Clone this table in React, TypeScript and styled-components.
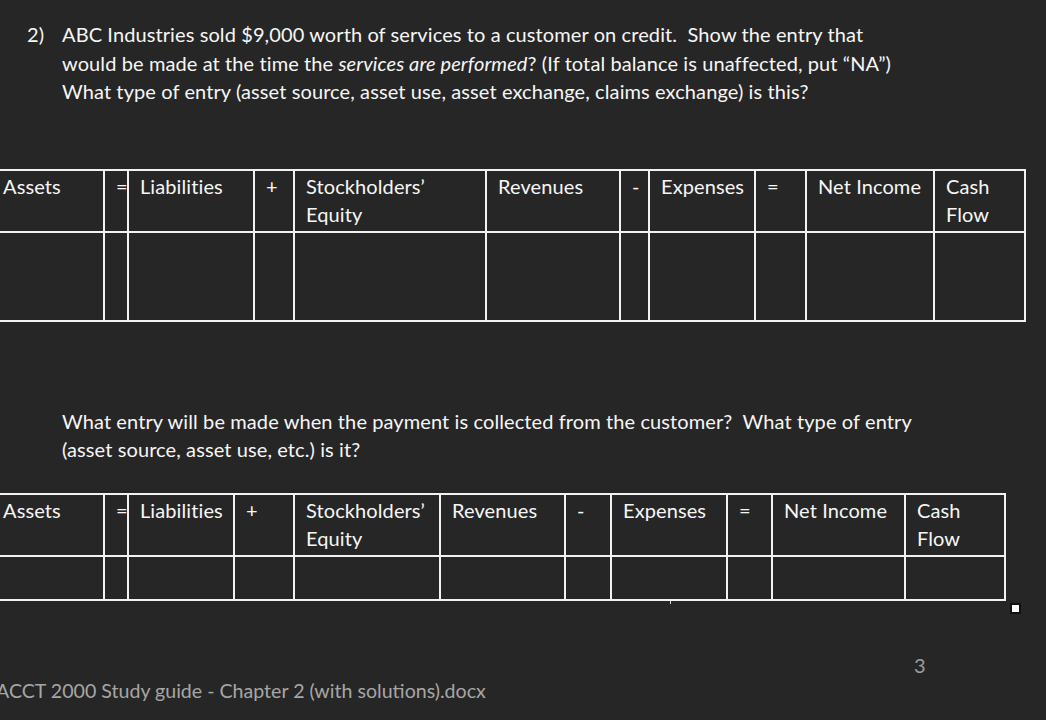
import React from "react";
import styled, { createGlobalStyle } from "styled-components";

const GlobalStyle = createGlobalStyle`
  html, body { margin: 0; padding: 0; background: #262626; }
  body { font-family: Lato, "Open Sans", sans-serif; color: #f6f6f6; }
`;

const Page = styled.div`
  width: 1046px;
  height: 720px;
  overflow: hidden;
  background: #262626;
  display: flex;
  flex-direction: column;
  font-size: 20px;
  letter-spacing: 0.1px;
  line-height: 28.5px;
`;

const Question = styled.div<{ $top: number }>`
  display: flex;
  margin-top: ${(p) => p.$top}px;
  padding-left: 27px;
`;

const Num = styled.div`
  width: 35px;
  flex: none;
`;

const Para = styled.div`
  flex: 1;
  white-space: pre;
`;

const TableWrap = styled.div<{ $top: number }>`
  position: relative;
  margin-top: ${(p) => p.$top}px;
  margin-left: -10px;
  align-self: flex-start;
`;

const Grid = styled.table`
  border-collapse: collapse;
  table-layout: fixed;
`;

const Col = styled.col<{ $w: number }>`
  width: ${(p) => p.$w}px;
`;

const HeadCell = styled.td`
  border: 2px solid #f2f2f2;
  padding: 1px 2px 3px 11px;
  vertical-align: top;
  white-space: pre;
  line-height: 28px;
  height: 56px;
`;

const BodyCell = styled.td<{ $h: number }>`
  border: 2px solid #f2f2f2;
  height: ${(p) => p.$h}px;
  padding: 0;
`;

const Handle = styled.div`
  position: absolute;
  right: -15px;
  bottom: -13px;
  width: 7px;
  height: 7px;
  background: #ffffff;
  border: 2px solid #111;
`;

const Tick = styled.div<{ $x: number }>`
  position: absolute;
  left: ${(p) => p.$x}px;
  bottom: -3px;
  width: 1px;
  height: 3px;
  background: #d8d8d8;
`;

const PageNum = styled.div`
  margin-top: 52px;
  padding-left: 914px;
  color: #9c9c9c;
  line-height: 25px;
`;

const Footer = styled.div`
  margin-left: -4px;
  color: #a6a6a6;
  font-size: 19.6px;
  letter-spacing: 0;
  line-height: 25px;
`;

type Column = { label: string; w: number };

const table1: Column[] = [
  { label: "Assets", w: 113 },
  { label: "=", w: 24 },
  { label: "Liabilities", w: 126 },
  { label: "+", w: 40 },
  { label: "Stockholders’\nEquity", w: 192 },
  { label: "Revenues", w: 134 },
  { label: "-", w: 29 },
  { label: "Expenses", w: 106 },
  { label: "=", w: 51 },
  { label: "Net Income", w: 128 },
  { label: "Cash\nFlow", w: 91 },
];

const table2: Column[] = [
  { label: "Assets", w: 113 },
  { label: "=", w: 24 },
  { label: "Liabilities", w: 106 },
  { label: "+", w: 60 },
  { label: "Stockholders’\nEquity", w: 146 },
  { label: "Revenues", w: 125 },
  { label: "-", w: 46 },
  { label: "Expenses", w: 116 },
  { label: "=", w: 45 },
  { label: "Net Income", w: 133 },
  { label: "Cash\nFlow", w: 100 },
];

function EntryTable({ cols, bodyH, top, extras }: { cols: Column[]; bodyH: number; top: number; extras?: React.ReactNode }) {
  const total = cols.reduce((s, c) => s + c.w, 0);
  return (
    <TableWrap $top={top}>
      <Grid style={{ width: total }}>
        <colgroup>
          {cols.map((c, i) => (
            <Col key={i} $w={c.w} />
          ))}
        </colgroup>
        <tbody>
          <tr>
            {cols.map((c, i) => (
              <HeadCell key={i}>{c.label}</HeadCell>
            ))}
          </tr>
          <tr>
            {cols.map((_, i) => (
              <BodyCell key={i} $h={bodyH} />
            ))}
          </tr>
        </tbody>
      </Grid>
      {extras}
    </TableWrap>
  );
}

export default function App() {
  return (
    <>
      <GlobalStyle />
      <Page>
        <Question $top={20}>
          <Num>2)</Num>
          <Para>
            ABC Industries sold $9,000 worth of services to a customer on credit.  Show the entry that{"\n"}
            would be made at the time the <i>services are performed</i>? (If total balance is unaffected, put “NA”){"\n"}
            What type of entry (asset source, asset use, asset exchange, claims exchange) is this?
          </Para>
        </Question>
        <EntryTable cols={table1} bodyH={87} top={63} />
        <Question $top={85}>
          <Num />
          <Para>
            What entry will be made when the payment is collected from the customer?  What type of entry{"\n"}
            (asset source, asset use, etc.) is it?
          </Para>
        </Question>
        <EntryTable
          cols={table2}
          bodyH={42}
          top={29}
          extras={
            <>
              <Tick $x={680} />
              <Handle />
            </>
          }
        />
        <PageNum>3</PageNum>
        <Footer>ACCT 2000 Study guide - Chapter 2 (with solutions).docx</Footer>
      </Page>
    </>
  );
}
